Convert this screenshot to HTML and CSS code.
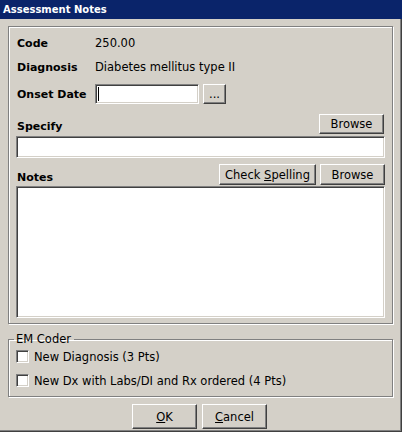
FILE: index.html
```html
<!DOCTYPE html>
<html>
<head>
<meta charset="utf-8">
<title>Assessment Notes</title>
<link rel="stylesheet" href="styles.css">
</head>
<body>
<div class="window">
  <div class="titlebar">Assessment Notes</div>
  <div class="panel">
    <div class="row row-code">
      <span class="label">Code</span>
      <span class="value">250.00</span>
    </div>
    <div class="row row-diag">
      <span class="label">Diagnosis</span>
      <span class="value">Diabetes mellitus type II</span>
    </div>
    <div class="row row-onset">
      <span class="label">Onset Date</span>
      <div class="field date-field"><span class="caret"></span></div>
      <div class="btn btn-dots"><span>...</span></div>
    </div>
    <div class="row row-head row-specify">
      <span class="label head-label">Specify</span>
      <div class="btn btn-browse"><span>Browse</span></div>
    </div>
    <div class="field specify-field"></div>
    <div class="row row-head row-notes">
      <span class="label head-label">Notes</span>
      <div class="btn btn-spell"><span>Check <u>S</u>pelling</span></div>
      <div class="btn btn-browse2"><span>Browse</span></div>
    </div>
    <div class="field notes-field"></div>
  </div>
  <fieldset class="group">
    <legend class="legend">EM Coder</legend>
    <div class="check-row first">
      <span class="checkbox"></span>
      <span class="check-text">New Diagnosis (3 Pts)</span>
    </div>
    <div class="check-row second">
      <span class="checkbox"></span>
      <span class="check-text">New Dx with Labs/DI and Rx ordered (4 Pts)</span>
    </div>
  </fieldset>
  <div class="actions">
    <div class="btn btn-action"><span><u>O</u>K</span></div>
    <div class="btn btn-action"><span><u>C</u>ancel</span></div>
  </div>
</div>
</body>
</html>
```
FILE: styles.css
```css
html, body {
  margin: 0;
  padding: 0;
  background: #d4d0c8;
}
body {
  font-family: "DejaVu Sans", "Liberation Sans", sans-serif;
  font-size: 11.5px;
  color: #000;
}
.window {
  width: 402px;
  height: 432px;
  box-sizing: border-box;
  background: #d4d0c8;
  box-shadow: inset -1px -1px 0 #404040, inset -2px -2px 0 #808080;
  overflow: hidden;
}
.titlebar {
  height: 19px;
  line-height: 19px;
  background: #0a246a;
  color: #fff;
  font-weight: bold;
  font-size: 10px;
  padding-left: 3px;
}
.panel {
  margin: 7px 0 0 8px;
  width: 385px;
  box-sizing: border-box;
  border: 1px solid #808080;
  box-shadow: inset 1px 1px 0 #fff, 1px 1px 0 #fff;
  padding: 7px 7px 5px 7px;
}
.row {
  display: flex;
  align-items: center;
}
.label {
  font-weight: bold;
  font-size: 11px;
  width: 78px;
  padding-left: 1px;
  flex: none;
}
.row-code {
  height: 18px;
}
.row-diag {
  height: 18px;
  margin-top: 6px;
}
.row-onset {
  height: 20px;
  margin-top: 8px;
}
.field {
  background: #fff;
  box-sizing: border-box;
  border: 1px solid;
  border-color: #808080 #fff #fff #808080;
  box-shadow: inset 1px 1px 0 #404040, inset -1px -1px 0 #d4d0c8;
}
.date-field {
  width: 104px;
  height: 20px;
  display: flex;
  align-items: center;
  padding-left: 2px;
}
.caret {
  width: 1px;
  height: 14px;
  background: #000;
}
.btn {
  box-sizing: border-box;
  background: #d4d0c8;
  border: 1px solid;
  border-color: #fff #404040 #404040 #fff;
  box-shadow: inset -1px -1px 0 #808080;
  display: flex;
  align-items: center;
  justify-content: center;
  flex: none;
  white-space: pre;
}
.btn u {
  text-decoration: underline;
}
.btn-dots {
  width: 23px;
  height: 20px;
  margin-left: 4px;
}
.row-head {
  align-items: stretch;
}
.head-label {
  flex: 1;
  display: flex;
  align-items: flex-end;
  padding-bottom: 1px;
}
.row-specify {
  height: 20px;
  margin-top: 10px;
  padding-right: 1px;
}
.btn-browse {
  width: 65px;
}
.specify-field {
  height: 22px;
  margin-top: 2px;
}
.row-notes {
  height: 21px;
  margin-top: 6px;
}
.btn-spell {
  width: 97px;
}
.btn-browse2 {
  width: 65px;
  margin-left: 4px;
}
.notes-field {
  height: 132px;
  margin-top: 1px;
}
.group {
  margin: 9px 0 0 8px;
  width: 385px;
  box-sizing: border-box;
  border: 1px solid #808080;
  box-shadow: inset 1px 1px 0 #fff, 1px 1px 0 #fff;
  padding: 0 7px 9px 7px;
  min-width: 0;
}
.legend {
  line-height: 13px;
  padding: 0 3px 0 2px;
  margin-left: -2px;
}
.check-row {
  display: flex;
  align-items: center;
  height: 13px;
}
.check-row.first {
  margin-top: 4px;
}
.check-row.second {
  margin-top: 11px;
}
.checkbox {
  width: 13px;
  height: 13px;
  box-sizing: border-box;
  background: #fff;
  border: 1px solid;
  border-color: #808080 #fff #fff #808080;
  box-shadow: inset 1px 1px 0 #404040, inset -1px -1px 0 #d4d0c8;
  flex: none;
}
.check-text {
  margin-left: 5px;
}
.actions {
  display: flex;
  gap: 5px;
  padding-left: 132px;
  margin-top: 7px;
}
.btn-action {
  width: 65px;
  height: 25px;
}
```
